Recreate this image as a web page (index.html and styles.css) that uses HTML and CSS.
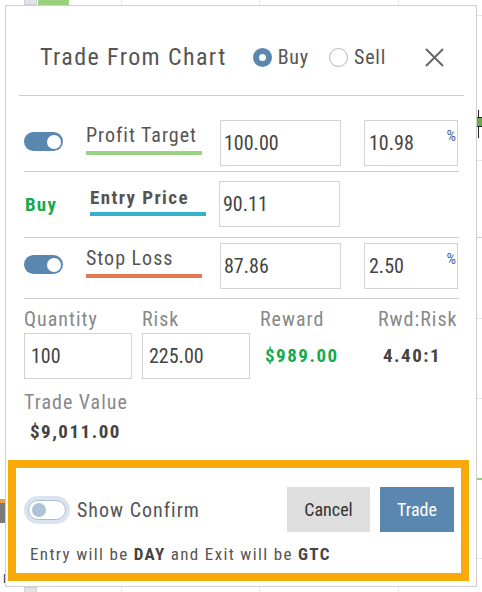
FILE: index.html
```html
<!DOCTYPE html>
<html lang="en">
<head>
<meta charset="utf-8">
<title>Trade From Chart</title>
<link rel="stylesheet" href="styles.css">
</head>
<body>
<div class="chart">
  <span class="vline" style="left:121px"></span>
  <span class="vline" style="left:259px"></span>
  <span class="vline" style="left:398px"></span>
  <span class="hline" style="top:15px"></span>
  <span class="hline" style="top:160px"></span>
  <span class="hline dotted" style="top:237px"></span>
  <span class="hline" style="top:318px"></span>
  <span class="hline" style="top:398px"></span>
  <span class="hline green" style="top:478px"></span>
  <span class="hline" style="top:558px"></span>
  <span class="candle"><span class="candle-body"></span></span>
  <span class="tab-gray tab-top"></span>
  <span class="tab-green">D</span>
  <span class="tab-gray tab-bottom"></span>
  <span class="side-marker"></span>
  <span class="axis-tick">L</span>
</div>

<div class="modal">
  <div class="header">
    <div class="title">Trade From Chart</div>
    <label class="radio radio-buy"><span class="dot checked"></span><span>Buy</span></label>
    <label class="radio radio-sell"><span class="dot"></span><span>Sell</span></label>
    <svg class="close" width="19" height="19" viewBox="0 0 19 19" aria-label="Close">
      <path d="M1 1 L18 18 M18 1 L1 18" stroke="#666" stroke-width="2" fill="none"/>
    </svg>
  </div>

  <div class="levels">
    <div class="row row-target">
      <span class="toggle on"><span class="knob"></span></span>
      <span class="lbl lbl-green">Profit Target</span>
      <input class="field field-price" type="text" value="100.00">
      <div class="pct-wrap"><input class="field field-pct" type="text" value="10.98"><span class="pct-sign">%</span></div>
    </div>
    <div class="row row-entry">
      <span class="side">Buy</span>
      <span class="lbl lbl-teal">Entry Price</span>
      <input class="field field-price" type="text" value="90.11">
    </div>
    <div class="row row-stop">
      <span class="toggle on"><span class="knob"></span></span>
      <span class="lbl lbl-orange">Stop Loss</span>
      <input class="field field-price" type="text" value="87.86">
      <div class="pct-wrap"><input class="field field-pct" type="text" value="2.50"><span class="pct-sign">%</span></div>
    </div>
  </div>

  <div class="stats">
    <div class="stat-label">Quantity</div>
    <div class="stat-label">Risk</div>
    <div class="stat-label">Reward</div>
    <div class="stat-label">Rwd:Risk</div>
    <input class="field field-stat" type="text" value="100">
    <input class="field field-stat" type="text" value="225.00">
    <div class="stat-value green">$989.00</div>
    <div class="stat-value">4.40:1</div>
  </div>

  <div class="trade-value">
    <div class="stat-label">Trade Value</div>
    <div class="stat-value tv-value">$9,011.00</div>
  </div>

  <div class="confirm">
    <div class="confirm-top">
      <span class="toggle off"><span class="knob"></span></span>
      <span class="confirm-label">Show Confirm</span>
      <button class="btn btn-cancel" type="button">Cancel</button>
      <button class="btn btn-trade" type="button">Trade</button>
    </div>
    <div class="note">Entry will be <b>DAY</b> and Exit will be <b>GTC</b></div>
  </div>
</div>
</body>
</html>
```

FILE: styles.css
```css
html, body {
  margin: 0;
  padding: 0;
}
body {
  width: 482px;
  height: 592px;
  position: relative;
  overflow: hidden;
  background: #fff;
  font-family: Roboto, "Liberation Sans", sans-serif;
  font-stretch: 87%;
  color: #555;
}

/* chart behind the dialog */
.chart {
  position: absolute;
  inset: 0;
}
.vline {
  position: absolute;
  top: 0;
  bottom: 0;
  width: 1px;
  background: #e8e8e8;
}
.hline {
  position: absolute;
  left: 476px;
  right: 0;
  height: 1px;
  background: #e6e6e6;
}
.hline.dotted {
  background: none;
  border-top: 1px dotted #bbb;
}
.hline.green {
  height: 2px;
  background: #93cf7c;
}
.candle {
  position: absolute;
  left: 478px;
  top: 110px;
  width: 1px;
  height: 28px;
  background: #222;
}
.candle-body {
  position: absolute;
  left: -3px;
  top: 7px;
  width: 8px;
  height: 10px;
  box-sizing: border-box;
  border: 1px solid #222;
  background: #6aa84f;
}
.tab-gray {
  position: absolute;
  left: 24px;
  width: 13px;
  height: 8px;
  background: #e0e3e7;
  border: 1px solid #cfd3d8;
  box-sizing: border-box;
}
.tab-top { top: -3px; }
.tab-bottom { top: 587px; }
.tab-green {
  position: absolute;
  left: 38px;
  top: -14px;
  width: 31px;
  height: 19px;
  background: #9bd07f;
  font: bold 15px Roboto, sans-serif;
  color: #555;
  text-align: center;
  line-height: 17px;
}
.side-marker {
  position: absolute;
  left: 0;
  top: 499px;
  width: 5px;
  height: 24px;
  background: #7a7a7a;
  border-top: 4px solid #e9a04a;
  box-sizing: border-box;
}
.axis-tick {
  position: absolute;
  left: 3px;
  top: 572px;
  font: 12px Roboto, sans-serif;
  color: #333;
}

/* dialog */
.modal {
  position: absolute;
  left: 5px;
  top: 5px;
  width: 472px;
  height: 582px;
  box-sizing: border-box;
  border: 1px solid #cfcfcf;
  background: #fff;
}

.header {
  display: flex;
  align-items: center;
  height: 90px;
  box-sizing: border-box;
  margin: 0 12px 0 13px;
  padding: 13px 20px 0 21px;
  border-bottom: 1px solid #ccc;
}
.title {
  font-size: 24px;
  letter-spacing: 1.4px;
  color: #555;
  white-space: nowrap;
}
.radio {
  display: flex;
  align-items: center;
  gap: 6px;
  font-size: 20px;
  letter-spacing: 0.8px;
  color: #555;
}
.radio-buy { margin-left: 26px; }
.radio-sell { margin-left: 20px; }
.dot {
  width: 19px;
  height: 19px;
  box-sizing: border-box;
  border-radius: 50%;
  border: 1px solid #b8b8b8;
  background: #fff;
}
.dot.checked {
  border: 6px solid #5a87b0;
}
.close {
  margin-left: auto;
  display: block;
}

.levels {
  margin: 0 17px 0 18px;
}
.row {
  display: grid;
  grid-template-columns: 62px 134px 144px 94px;
  align-items: start;
  border-bottom: 1px solid #ccc;
}
.row-target { padding: 24px 0 5px; }
.row-entry {
  padding: 9px 0 10px;
  grid-template-columns: 66px 129px 144px 95px;
}
.row-stop { padding: 5px 0 9px; }

.toggle {
  display: flex;
  align-items: center;
  justify-content: flex-end;
  box-sizing: border-box;
  width: 39px;
  height: 19px;
  padding: 0 2px;
  border-radius: 10px;
  background: #5a87b0;
  margin-top: 12px;
}
.knob {
  width: 14px;
  height: 14px;
  border-radius: 50%;
  background: #fff;
}

.lbl {
  margin-top: 4px;
  width: 116px;
  font-size: 20px;
  line-height: 22px;
  padding-bottom: 5px;
  border-bottom: 4px solid;
  letter-spacing: 1px;
  color: #555;
  white-space: nowrap;
}
.lbl-green { border-color: #9bd383; }
.lbl-orange { border-color: #e8784e; }
.lbl-teal {
  border-color: #34b2cd;
  font-weight: bold;
  font-size: 19px;
  letter-spacing: 1.4px;
  margin-top: 6px;
  padding-bottom: 3px;
}
.side {
  align-self: center;
  padding-left: 1px;
  font-weight: bold;
  font-size: 19px;
  letter-spacing: 1.2px;
  color: #19aa4b;
}

.field {
  display: block;
  box-sizing: border-box;
  height: 46px;
  margin: 0;
  border: 1px solid #d0d4da;
  border-radius: 0;
  background: #fff;
  font-family: Roboto, "Liberation Sans", sans-serif;
  font-stretch: 87%;
  font-size: 20px;
  color: #444;
  outline: none;
}
.field-price {
  width: 121px;
  padding: 0 3px;
}
.pct-wrap {
  position: relative;
  width: 94px;
}
.field-pct {
  width: 94px;
  padding: 0 4px;
}
.pct-sign {
  position: absolute;
  top: 7px;
  right: 2px;
  font-size: 15px;
  color: #44639a;
}

.stats {
  margin: 0 17px 0 18px;
  padding-top: 9px;
  display: grid;
  grid-template-columns: 108px 108px 108px auto;
  column-gap: 10px;
  row-gap: 3px;
  align-items: center;
}
.stat-label {
  font-size: 20px;
  line-height: 22px;
  letter-spacing: 1px;
  color: #888;
  white-space: nowrap;
}
.field-stat {
  width: 108px;
  padding: 0 6px;
}
.stat-value {
  font-weight: bold;
  font-size: 19px;
  line-height: 22px;
  letter-spacing: 1.5px;
  color: #444;
  padding-left: 5px;
  white-space: nowrap;
}
.stat-value.green { color: #19aa4b; }

.trade-value {
  margin: 12px 17px 0 18px;
}
.tv-value {
  margin-top: 8px;
  padding-left: 6px;
}

.confirm {
  margin: 17px 7px 0 2px;
  border: 8px solid #f8ab08;
  padding: 19px 7px 9px 12px;
}
.confirm-top {
  display: flex;
  align-items: center;
  height: 45px;
}
.toggle.off {
  margin-top: 0;
  width: 38px;
  height: 20px;
  justify-content: flex-start;
  padding: 0 3px;
  background: #fff;
  border: 1px solid #a9bfd6;
  box-shadow: 0 0 0 4px #dbe4ee;
}
.toggle.off .knob {
  background: #aec3d8;
}
.confirm-label {
  margin-left: 11px;
  font-size: 20px;
  letter-spacing: 1px;
  color: #555;
}
.btn {
  height: 45px;
  border: none;
  border-radius: 0;
  font-family: Roboto, "Liberation Sans", sans-serif;
  font-stretch: 87%;
  font-size: 18px;
  padding: 0;
}
.btn-cancel {
  margin-left: auto;
  width: 83px;
  background: #dedede;
  color: #333;
}
.btn-trade {
  margin-left: 10px;
  width: 74px;
  background: #5a87b0;
  color: #fff;
}
.note {
  margin-top: 12px;
  padding-left: 2px;
  font-size: 17px;
  line-height: 20px;
  letter-spacing: 1.35px;
  color: #555;
}
.note b {
  color: #444;
}
```
